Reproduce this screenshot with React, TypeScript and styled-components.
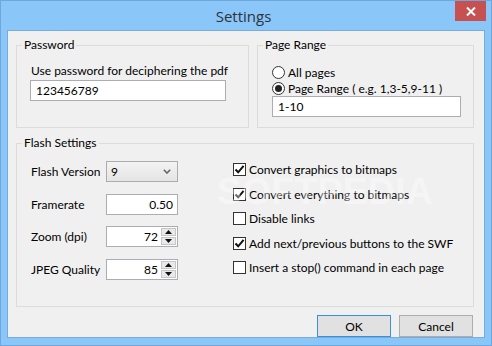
import React from 'react';
import styled, {createGlobalStyle} from 'styled-components';

const GlobalStyle = createGlobalStyle`
  * {
    box-sizing: border-box;
  }

  html, body {
    margin: 0;
    padding: 0;
    background: #ffffff;
  }

  body {
    font-family: Lato, "Noto Sans", sans-serif;
    font-size: 12px;
    color: #000000;
  }
`

const Window = styled.div`
  position: relative;
  width: 492px;
  height: 346px;
  background: #8bc6f8;
  border: 1px solid #6fa6dc;
  display: flex;
  flex-direction: column;
`

const TitleBar = styled.div`
  height: 29px;
  display: grid;
  grid-template-columns: 1fr auto 1fr;
  padding-right: 5px;
`

const Title = styled.div`
  grid-column: 2;
  align-self: center;
  font-family: "Open Sans", "Noto Sans", sans-serif;
  font-size: 15px;
  color: #2b3340;
  padding-top: 1px;
`

const CloseButton = styled.div`
  grid-column: 3;
  justify-self: end;
  width: 31px;
  height: 20px;
  background: #c75050;
  display: flex;
  align-items: center;
  justify-content: center;
`

const Client = styled.div`
  margin: 0 6px 7px 6px;
  height: 308px;
  border: 1px solid #77acdd;
  background: #f0f0f0;
  padding: 6px 10px 0 8px;
  display: flex;
  flex-direction: column;
  white-space: nowrap;
`

const TopRow = styled.div`
  display: flex;
  gap: 8px;
  height: 91px;
`

const Group = styled.fieldset<{ $width?: number; $height?: number }>`
  margin: 0;
  padding: 0;
  border: 1px solid #dcdcdc;
  min-width: 0;
  ${p => p.$width ? `width: ${p.$width}px; flex-shrink: 0;` : 'flex: 1;'}
  ${p => p.$height ? `height: ${p.$height}px;` : ''}
`

const Caption = styled.legend`
  margin-left: 5px;
  padding: 0 2px;
  line-height: 16px;
`

const GroupBody = styled.div<{ $pad: string }>`
  padding: ${p => p.$pad};
  display: flex;
  flex-direction: column;
`

const FieldLabel = styled.div`
  line-height: 16px;
  margin-bottom: 1px;
  padding-left: 1px;
`

const TextBox = styled.input<{ $width: number }>`
  width: ${p => p.$width}px;
  height: 21px;
  border: 1px solid #abadb3;
  background: #ffffff;
  padding: 0 5px;
  font: inherit;
  color: #000000;
  outline: none;
`

const OptionRow = styled.label`
  display: flex;
  align-items: center;
  gap: 3px;
  height: 16px;
`

const RadioDot = styled.span<{ $on?: boolean }>`
  width: 13px;
  height: 13px;
  border-radius: 50%;
  border: 1px solid #333333;
  background: #ffffff;
  display: flex;
  align-items: center;
  justify-content: center;

  &::after {
    content: "";
    width: 7px;
    height: 7px;
    border-radius: 50%;
    background: ${p => p.$on ? '#222222' : 'transparent'};
  }
`

const FlashBody = styled.div`
  display: flex;
  padding: 10px 13px 0 13px;
`

const FormColumn = styled.div`
  display: flex;
  flex-direction: column;
  gap: 11.5px;
  width: 148px;
  flex-shrink: 0;
`

const FormRow = styled.div`
  display: flex;
  align-items: center;
  height: 21px;
`

const RowLabel = styled.div`
  width: 76px;
  padding-left: 1px;
`

const Select = styled.div`
  width: 72px;
  height: 21px;
  border: 1px solid #acacac;
  background: linear-gradient(#f2f2f2, #e5e5e5);
  display: flex;
  align-items: center;
  justify-content: space-between;
  padding: 0 6px 0 4px;
`

const NumberBox = styled.div`
  width: 72px;
  height: 21px;
  border: 1px solid #abadb3;
  background: #ffffff;
  display: flex;
  align-items: stretch;
  padding: 1px;
`

const NumberValue = styled.div`
  flex: 1;
  text-align: right;
  padding-right: 3px;
  line-height: 17px;
`

const SpinColumn = styled.div`
  width: 15px;
  display: flex;
  flex-direction: column;
  gap: 1px;
`

const SpinButton = styled.div`
  flex: 1;
  background: #e9e9e9;
  border: 1px solid #c6c6c6;
  display: flex;
  align-items: center;
  justify-content: center;
`

const CheckColumn = styled.div`
  display: flex;
  flex-direction: column;
  gap: 8.5px;
  margin-left: 55px;
  padding-top: 0.5px;
  flex-shrink: 0;
`

const CheckBox = styled.span`
  width: 13px;
  height: 13px;
  border: 1px solid #333333;
  background: #ffffff;
  display: flex;
  align-items: center;
  justify-content: center;
`

const ButtonRow = styled.div`
  display: flex;
  justify-content: flex-end;
  gap: 8px;
  margin-top: 8px;
  margin-right: 1px;
`

const Button = styled.div<{ $default?: boolean }>`
  width: 74px;
  height: 22px;
  border: 1px solid ${p => p.$default ? '#3c8ee0' : '#adadad'};
  background: #e1e1e1;
  display: flex;
  align-items: center;
  justify-content: center;
`

const Watermark = styled.div`
  position: absolute;
  left: 216px;
  top: 170px;
  font-family: "Liberation Sans", sans-serif;
  font-weight: bold;
  font-size: 37px;
  letter-spacing: 0.5px;
  color: rgba(255, 255, 255, 0.4);
  pointer-events: none;
`

const Check = () => (
    <svg width="11" height="11" viewBox="0 0 11 11">
        <path d="M1.5 5.5 L4.2 8.3 L9.6 1.8" fill="none" stroke="#111" strokeWidth="2"/>
    </svg>
)

const Arrow = ({up}: { up?: boolean }) => (
    <svg width="7" height="4" viewBox="0 0 7 4">
        <path d={up ? "M0 4 L3.5 0 L7 4 Z" : "M0 0 L3.5 4 L7 0 Z"} fill="#111"/>
    </svg>
)

const options = [
    {label: 'Convert graphics to bitmaps', checked: true},
    {label: 'Convert everything to bitmaps', checked: true},
    {label: 'Disable links', checked: false},
    {label: 'Add next/previous buttons to the SWF', checked: true},
    {label: 'Insert a stop() command in each page', checked: false},
]

export default function App() {
    return (
        <>
            <GlobalStyle/>
            <Window>
                <TitleBar>
                    <Title>Settings</Title>
                    <CloseButton>
                        <svg width="10" height="9" viewBox="0 0 10 9">
                            <path d="M1 0.5 L9 8.5 M9 0.5 L1 8.5" stroke="#fff" strokeWidth="2"/>
                        </svg>
                    </CloseButton>
                </TitleBar>
                <Client>
                    <TopRow>
                        <Group $width={233}>
                            <Caption>Password</Caption>
                            <GroupBody $pad="10px 13px 0 13px">
                                <FieldLabel>Use password for deciphering the pdf</FieldLabel>
                                <TextBox $width={196} defaultValue="123456789" readOnly/>
                            </GroupBody>
                        </Group>
                        <Group>
                            <Caption>Page Range</Caption>
                            <GroupBody $pad="11px 13px 0 14px">
                                <OptionRow><RadioDot/>All pages</OptionRow>
                                <OptionRow><RadioDot $on/>Page Range ( e.g. 1,3-5,9-11 )</OptionRow>
                                <TextBox $width={189} defaultValue="1-10" readOnly/>
                            </GroupBody>
                        </Group>
                    </TopRow>
                    <Group $height={165} style={{marginTop: 7}}>
                        <Caption>Flash Settings</Caption>
                        <FlashBody>
                            <FormColumn>
                                <FormRow>
                                    <RowLabel>Flash Version</RowLabel>
                                    <Select>
                                        <span>9</span>
                                        <svg width="8" height="5" viewBox="0 0 8 5">
                                            <path d="M0.8 0.8 L4 4 L7.2 0.8" fill="none" stroke="#666" strokeWidth="1.6"/>
                                        </svg>
                                    </Select>
                                </FormRow>
                                <FormRow>
                                    <RowLabel>Framerate</RowLabel>
                                    <NumberBox>
                                        <NumberValue>0.50</NumberValue>
                                    </NumberBox>
                                </FormRow>
                                <FormRow>
                                    <RowLabel>Zoom (dpi)</RowLabel>
                                    <NumberBox>
                                        <NumberValue>72</NumberValue>
                                        <SpinColumn>
                                            <SpinButton><Arrow up/></SpinButton>
                                            <SpinButton><Arrow/></SpinButton>
                                        </SpinColumn>
                                    </NumberBox>
                                </FormRow>
                                <FormRow>
                                    <RowLabel>JPEG Quality</RowLabel>
                                    <NumberBox>
                                        <NumberValue>85</NumberValue>
                                        <SpinColumn>
                                            <SpinButton><Arrow up/></SpinButton>
                                            <SpinButton><Arrow/></SpinButton>
                                        </SpinColumn>
                                    </NumberBox>
                                </FormRow>
                            </FormColumn>
                            <CheckColumn>
                                {options.map(o => (
                                    <OptionRow key={o.label}>
                                        <CheckBox>{o.checked && <Check/>}</CheckBox>
                                        {o.label}
                                    </OptionRow>
                                ))}
                            </CheckColumn>
                        </FlashBody>
                    </Group>
                    <ButtonRow>
                        <Button $default>OK</Button>
                        <Button>Cancel</Button>
                    </ButtonRow>
                </Client>
                <Watermark>SOFTPEDIA</Watermark>
            </Window>
        </>
    );
}
